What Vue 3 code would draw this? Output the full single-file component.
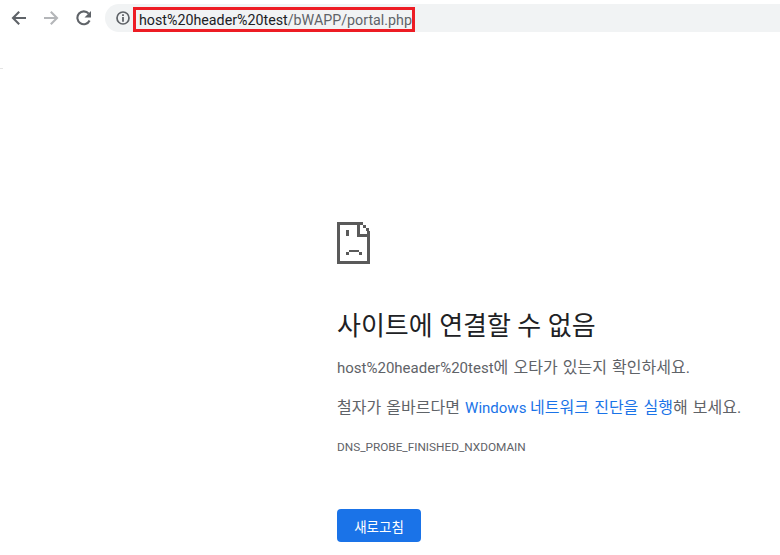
<script setup>
</script>

<template>
  <div class="page">
    <header class="toolbar">
      <svg class="nav" width="18" height="18" viewBox="0 0 18 18">
        <path d="M16 9H3.5M9.200 2.800 3 9l6.200 6.200" fill="none" stroke="#5f6368" stroke-width="2.100" />
      </svg>
      <svg class="nav" width="18" height="18" viewBox="0 0 18 18">
        <path d="M1 9h12.500M7.800 2.800 14 9l-6.200 6.200" fill="none" stroke="#b4b6b9" stroke-width="2.100" />
      </svg>
      <svg class="nav" width="18" height="18" viewBox="0 0 18 18">
        <path d="M13.600 11.500A6.400 6.400 0 1 1 12.700 4.700" fill="none" stroke="#5f6368" stroke-width="2.100" />
        <path d="M15 2v6.500H8.500z" fill="#5f6368" />
      </svg>
      <div class="omnibox">
        <svg class="info" width="14" height="14" viewBox="0 0 14 14">
          <circle cx="7" cy="7" r="6" fill="none" stroke="#5f6368" stroke-width="1.700" />
          <path d="M6.100 3.300h1.800V5H6.100zM6.100 6.100h1.800v4.600H6.100z" fill="#5f6368" />
        </svg>
        <div class="url"><span class="host">host%20header%20test</span><span class="path">/bWAPP/portal.php</span></div>
      </div>
    </header>
    <span class="speck"></span>

    <main class="content">
      <svg class="sad" width="33" height="42" viewBox="0 0 33 42" shape-rendering="crispEdges">
        <path fill="#5a5a5a" d="M0 0h26v3h3v3h3v3h1v33H0zM3 3v36h27V15H20V3zM23 3v9h7V9h-1V6h-3V3z" fill-rule="evenodd" />
        <path fill="#5a5a5a" d="M9 8h3v6H9zM12 28h10v2H12zM9 30h3v3H9zM22 30h3v3h-3z" />
      </svg>
      <h1 class="title">사이트에 연결할 수 없음</h1>
      <p class="line first">host%20header%20test<span class="ko">에 오타가 있는지 확인하세요.</span></p>
      <p class="line"><span class="ko">철자가 올바르다면 </span><span class="link">Windows <span class="ko">네트워크 진단을 실행</span></span><span class="ko">해 보세요.</span></p>
      <p class="code">DNS_PROBE_FINISHED_NXDOMAIN</p>
      <button class="reload">새로고침</button>
    </main>
  </div>
</template>

<style>
html, body { margin: 0; background: #fff; }
</style>

<style scoped>
.page {
  position: relative;
  width: 780px;
  height: 555px;
  overflow: hidden;
  background: #fff;
  font-family: Roboto, "Noto Sans CJK KR", sans-serif;
}
.speck {
  position: absolute;
  left: 0;
  top: 68px;
  width: 3px;
  height: 1px;
  background: #e4e4e4;
}
.toolbar {
  display: flex;
  align-items: center;
  height: 28px;
  padding: 4px 0 0 10px;
}
.nav { margin-right: 15px; flex: none; }
.omnibox {
  flex: 1;
  height: 28px;
  margin-left: -4px;
  display: flex;
  align-items: center;
  background: #f1f3f4;
  border-radius: 14px 0 0 14px;
  padding-left: 11px;
}
.info { flex: none; }
.url {
  box-sizing: border-box;
  margin: 3px 0 0 3px;
  height: 25px;
  width: 282px;
  border: 3px solid #ed1c24;
  display: flex;
  align-items: center;
  padding-left: 3px;
  font-size: 14.250px;
  white-space: nowrap;
}
.host { color: #202124; }
.path { color: #5f6368; }
.content {
  padding: 190px 0 0 337px;
}
.sad { display: block; }
.title {
  margin: 44px 0 0;
  font-size: 26px;
  line-height: 36px;
  font-weight: 400;
  color: #202124;
}
.line {
  margin: 18px 0 0;
  font-size: 15px;
  line-height: 21px;
  color: #5f6368;
  white-space: nowrap;
}
.ko { font-size: 16px; word-spacing: 1.200px; }
.first { margin-top: 13px; }
.link { color: #1a73e8; }
.code {
  margin: 20px 0 0;
  font-size: 11.800px;
  line-height: 16px;
  color: #5f6368;
}
.reload {
  display: block;
  margin-top: 54px;
  width: 84px;
  height: 33px;
  border: 0;
  border-radius: 4px;
  background: #1a73e8;
  color: #fff;
  font-family: inherit;
  font-size: 13.500px;
  padding: 0;
}
</style>
